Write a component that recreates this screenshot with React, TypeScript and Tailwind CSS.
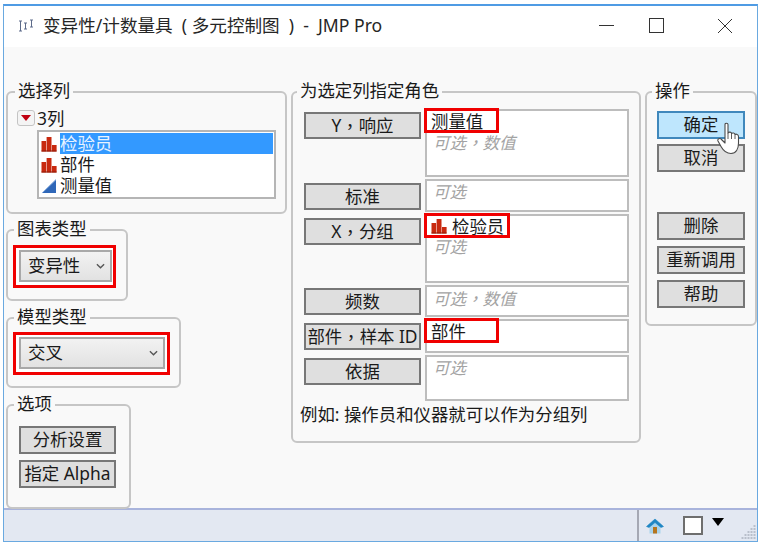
import React from 'react';

const font = { fontFamily: '"Noto Sans", "Noto Sans CJK SC", sans-serif' };

function BarIcon({ className = '' }: { className?: string }) {
  return (
    <svg viewBox="0 0 16 16" className={className}>
      <rect x="0.5" y="5" width="4.6" height="10.5" fill="#c8290f" />
      <rect x="5.6" y="1" width="4.9" height="14.5" fill="#c8290f" />
      <rect x="11" y="9" width="4.6" height="6.5" fill="#c8290f" />
      <rect x="0.5" y="14.5" width="15" height="1" fill="#8e1c0a" />
    </svg>
  );
}

function RampIcon({ className = '' }: { className?: string }) {
  return (
    <svg viewBox="0 0 16 16" className={className}>
      <path d="M1 15 L15 1.5 L15 15 Z" fill="#2f67b8" />
      <path d="M1 15 L15 1.5" stroke="#8fb2e0" strokeWidth="1" fill="none" />
    </svg>
  );
}

// centred fullwidth comma, as the Windows font draws it
function Comma() {
  return <span className="font-['Noto_Sans_CJK_TC']">，</span>;
}

function Group({
  title,
  className,
  legend = 'left-[6px]',
  children,
}: {
  title: string;
  className: string;
  legend?: string;
  children?: React.ReactNode;
}) {
  return (
    <div className={`relative rounded-md border-2 border-[#c6c6c6] ${className}`}>
      <span className={`absolute top-[-15px] bg-[#f9f9f9] px-[3px] text-[17.4px] leading-[24px] text-[#1a1a1a] ${legend}`}>
        {title}
      </span>
      {children}
    </div>
  );
}

function Btn({ label, className = '', hot }: { label: React.ReactNode; className?: string; hot?: boolean }) {
  return (
    <div
      className={`flex items-center justify-center whitespace-nowrap border-2 text-[17.4px] leading-none text-[#1a1a1a] ${
        hot ? 'border-[#4088bc] bg-[#bee6fd]' : 'border-[#777777] bg-[#dfdfdf]'
      } ${className}`}
    >
      {label}
    </div>
  );
}

function Select({ label, className, wrap }: { label: string; className: string; wrap: string }) {
  return (
    <div className={`w-fit border-[3px] border-[#f00000] bg-white pb-[3px] pl-[3px] pt-[2px] ${wrap}`}>
      <div
        className={`flex items-center justify-between border-2 border-[#a8a8a8] bg-gradient-to-b from-[#f2f2f2] to-[#e2e2e2] pl-[7px] pr-[5px] text-[17.4px] leading-none text-[#1a1a1a] ${className}`}
      >
        {label}
        <svg viewBox="0 0 10 6" className="h-[6px] w-[9px]">
          <path d="M1 1 L5 5 L9 1" fill="none" stroke="#555" strokeWidth="1.5" />
        </svg>
      </div>
    </div>
  );
}

function RoleRow({
  label,
  boxH,
  btnTop,
  children,
}: {
  label: React.ReactNode;
  boxH: string;
  btnTop: string;
  children?: React.ReactNode;
}) {
  return (
    <div className="flex items-start">
      <Btn label={label} className={`h-[27px] w-[117px] ${btnTop}`} />
      <div className={`relative ml-[4px] w-[204px] border-2 border-[#bdbdbd] bg-white pl-[4px] text-[17.4px] leading-[20px] ${boxH}`}>
        {children}
      </div>
    </div>
  );
}

function Hint({ children }: { children: React.ReactNode }) {
  return <div className="pl-[2px] text-[16.5px] italic leading-[22px] text-[#a3a3a3]">{children}</div>;
}

function RedMark({ className }: { className: string }) {
  return <div className={`absolute left-[-3px] top-[-3px] h-[25px] border-[3px] border-[#f00000] ${className}`} />;
}

export default function App() {
  return (
    <div className="h-[545px] w-[763px] overflow-hidden bg-white pl-[3px] pt-[4px]" style={font}>
      <div className="flex h-[538px] w-[755px] flex-col border border-t-2 border-[#6aa9e0] border-t-[#4f9be4]">
        {/* title bar */}
        <div className="flex h-[41px] shrink-0 items-center bg-white pb-[2px] pl-[14px]">
          <svg viewBox="0 0 16 16" className="h-[16px] w-[16px]">
            <path
              d="M1 3 H4 M2.5 3 V13 M1 13 H4 M6 5 H9 M7.5 5 V11 M6 11 H9 M12 2 H15 M13.5 2 V9 M12 9 H15"
              stroke="#5d6b8a"
              strokeWidth="1"
              fill="none"
            />
          </svg>
          <span className="ml-[9px] whitespace-pre text-[17.6px] leading-none text-[#262626]">
            {'变异性/计数量具  ( 多元控制图  )  -  JMP Pro'}
          </span>
          <div className="ml-auto flex items-center pr-[24px]">
            <div className="h-[1px] w-[15px] bg-[#333]" />
            <div className="ml-[35px] h-[15px] w-[15px] border border-[#333]" />
            <svg viewBox="0 0 16 16" className="ml-[53px] h-[16px] w-[16px]">
              <path d="M1 1 L15 15 M15 1 L1 15" stroke="#333" strokeWidth="1" />
            </svg>
          </div>
        </div>

        {/* dialog body */}
        <div className="flex min-h-0 flex-1 items-start bg-[#f9f9f9] pl-[2px] pt-[44px]">
          <div className="flex w-[281px] shrink-0 flex-col items-start">
            <Group title="选择列" legend="left-[7px]" className="h-[123px] w-[281px] pl-[9px] pt-[16px]">
              <div className="flex items-center text-[17.4px] leading-[18px] text-[#1a1a1a]">
                <div className="mr-[2px] flex h-[16px] w-[18px] items-center justify-center rounded-[3px] border border-[#c4c4c4] bg-[#f4f4f4]">
                  <div className="h-0 w-0 border-x-[5px] border-t-[6px] border-x-transparent border-t-[#c00010]" />
                </div>
                3列
              </div>
              <div className="ml-[20px] mt-[3px] h-[69px] w-[239px] border-2 border-[#b5b5b5] bg-white pl-[2px] pt-[1px] text-[17.4px] leading-[21px] text-[#1a1a1a]">
                <div className="flex items-center">
                  <BarIcon className="h-[16px] w-[16px]" />
                  <span className="ml-[3px] h-[21px] w-[213px] bg-[#3399ff] text-[#e8f3ff]">检验员</span>
                </div>
                <div className="flex items-center">
                  <BarIcon className="h-[16px] w-[16px]" />
                  <span className="ml-[3px]">部件</span>
                </div>
                <div className="flex items-center">
                  <RampIcon className="h-[16px] w-[16px]" />
                  <span className="ml-[3px]">测量值</span>
                </div>
              </div>
            </Group>

            <Group title="图表类型" className="mt-[15px] h-[72px] w-[122px] pl-[5px] pt-[14px]">
              <Select label="变异性" className="h-[32px] w-[93px]" wrap="pr-[1px]" />
            </Group>

            <Group title="模型类型" className="mt-[16px] h-[71px] w-[175px] pl-[5px] pt-[13px]">
              <Select label="交叉" className="h-[32px] w-[146px]" wrap="pr-[2px]" />
            </Group>

            <Group title="选项" className="mt-[16px] h-[105px] w-[125px] pl-[11px] pt-[20px]">
              <Btn label="分析设置" className="h-[28px] w-[97px]" />
              <Btn label="指定 Alpha" className="mt-[6px] h-[28px] w-[97px]" />
            </Group>
          </div>

          <Group title="为选定列指定角色" legend="left-[4px]" className="ml-[4px] h-[352px] w-[350px] pl-[11px] pt-[16px]">
            <div className="flex flex-col gap-[2px]">
              <RoleRow label={<>Y<Comma />响应</>} boxH="h-[68px]" btnTop="mt-[3px]">
                <RedMark className="w-[75px]" />
                <div className="text-[#1a1a1a]">测量值</div>
                <Hint>可选<Comma />数值</Hint>
              </RoleRow>
              <RoleRow label="标准" boxH="h-[33px]" btnTop="mt-[4px]">
                <Hint>可选</Hint>
              </RoleRow>
              <RoleRow label={<>X<Comma />分组</>} boxH="h-[69px]" btnTop="mt-[4px]">
                <RedMark className="w-[86px]" />
                <div className="flex items-center text-[#1a1a1a]">
                  <BarIcon className="h-[16px] w-[16px]" />
                  <span className="ml-[5px]">检验员</span>
                </div>
                <Hint>可选</Hint>
              </RoleRow>
              <RoleRow label="频数" boxH="h-[32px]" btnTop="mt-[3px]">
                <Hint>可选<Comma />数值</Hint>
              </RoleRow>
              <RoleRow label={<>部件<Comma />样本 ID</>} boxH="h-[34px]" btnTop="mt-[4px]">
                <RedMark className="w-[75px]" />
                <div className="text-[#1a1a1a]">部件</div>
              </RoleRow>
              <RoleRow label="依据" boxH="h-[46px]" btnTop="mt-[3px]">
                <Hint>可选</Hint>
              </RoleRow>
            </div>
            <div className="-ml-[4px] mt-[1px] whitespace-nowrap text-[17.4px] leading-[24px] text-[#1a1a1a]">
              例如: 操作员和仪器就可以作为分组列
            </div>
          </Group>

          <Group title="操作" legend="left-[5px]" className="relative ml-[4px] h-[235px] w-[112px] pl-[10px] pt-[18px]">
            <Btn label="确定" hot className="h-[28px] w-[88px]" />
            <Btn label="取消" className="mt-[5px] h-[28px] w-[88px]" />
            <Btn label="删除" className="mt-[40px] h-[28px] w-[88px]" />
            <Btn label="重新调用" className="mt-[6px] h-[28px] w-[88px]" />
            <Btn label="帮助" className="mt-[6px] h-[28px] w-[88px]" />
            {/* mouse pointer */}
            <svg viewBox="0 0 26 33" className="absolute left-[70px] top-[29px] h-[33px] w-[26px]">
              <path
                d="M8 2.5 C8 0.8 11 0.8 11 2.5 V11 C12 9.5 14.5 10 14.5 11.5 C15.5 10.5 17.8 11 18 12.5 C19 11.8 21.5 12.3 21.5 14.5 V21 C21.5 27 19 31.5 14 31.5 C9 31.5 6.5 29 4 24.5 L1 19 C0 17 3 15.5 4.5 17.5 L8 21 Z"
                fill="white"
                stroke="#4a4a4a"
                strokeWidth="1.1"
                strokeLinejoin="round"
              />
              <path d="M11 11 V17 M14.5 11.5 V17 M18 12.5 V17" stroke="#4a4a4a" strokeWidth="0.9" fill="none" />
            </svg>
          </Group>
        </div>

        {/* status bar */}
        <div className="flex h-[33px] shrink-0 items-stretch border-t-2 border-[#a9b4dc] bg-[#e3e8f2]">
          <div className="ml-auto flex items-center">
            <div className="h-[31px] w-[2px] bg-[#a5a8b4]" />
            <svg viewBox="0 0 18 16" className="ml-[7px] h-[16px] w-[18px]">
              <path d="M3.5 8 L9 3.5 L14.5 8 V15.5 H3.5 Z" fill="#a9d3ec" />
              <path d="M9 1 L0.5 8.5 L3 9.5 L9 4.5 L15 9.5 L17.5 8.5 Z" fill="#1f86c4" stroke="#1f86c4" strokeWidth="0.6" />
              <rect x="7" y="9" width="4" height="6.5" fill="#b5751f" />
            </svg>
            <div className="ml-[19px] h-[19px] w-[20px] border-2 border-[#6e6e6e] bg-white" />
            <div className="mb-[7px] ml-[9px] h-0 w-0 border-x-[6px] border-t-[8px] border-x-transparent border-t-black" />
            <svg viewBox="0 0 16 16" className="ml-[16px] mt-[13px] h-[16px] w-[17px]">
              <g fill="#b9bfcb">
                <rect x="13" y="1" width="2" height="2" />
                <rect x="10" y="4" width="2" height="2" />
                <rect x="13" y="4" width="2" height="2" />
                <rect x="7" y="7" width="2" height="2" />
                <rect x="10" y="7" width="2" height="2" />
                <rect x="13" y="7" width="2" height="2" />
                <rect x="4" y="10" width="2" height="2" />
                <rect x="7" y="10" width="2" height="2" />
                <rect x="10" y="10" width="2" height="2" />
                <rect x="13" y="10" width="2" height="2" />
                <rect x="1" y="13" width="2" height="2" />
                <rect x="4" y="13" width="2" height="2" />
                <rect x="7" y="13" width="2" height="2" />
                <rect x="10" y="13" width="2" height="2" />
                <rect x="13" y="13" width="2" height="2" />
              </g>
            </svg>
          </div>
        </div>
      </div>
    </div>
  );
}
